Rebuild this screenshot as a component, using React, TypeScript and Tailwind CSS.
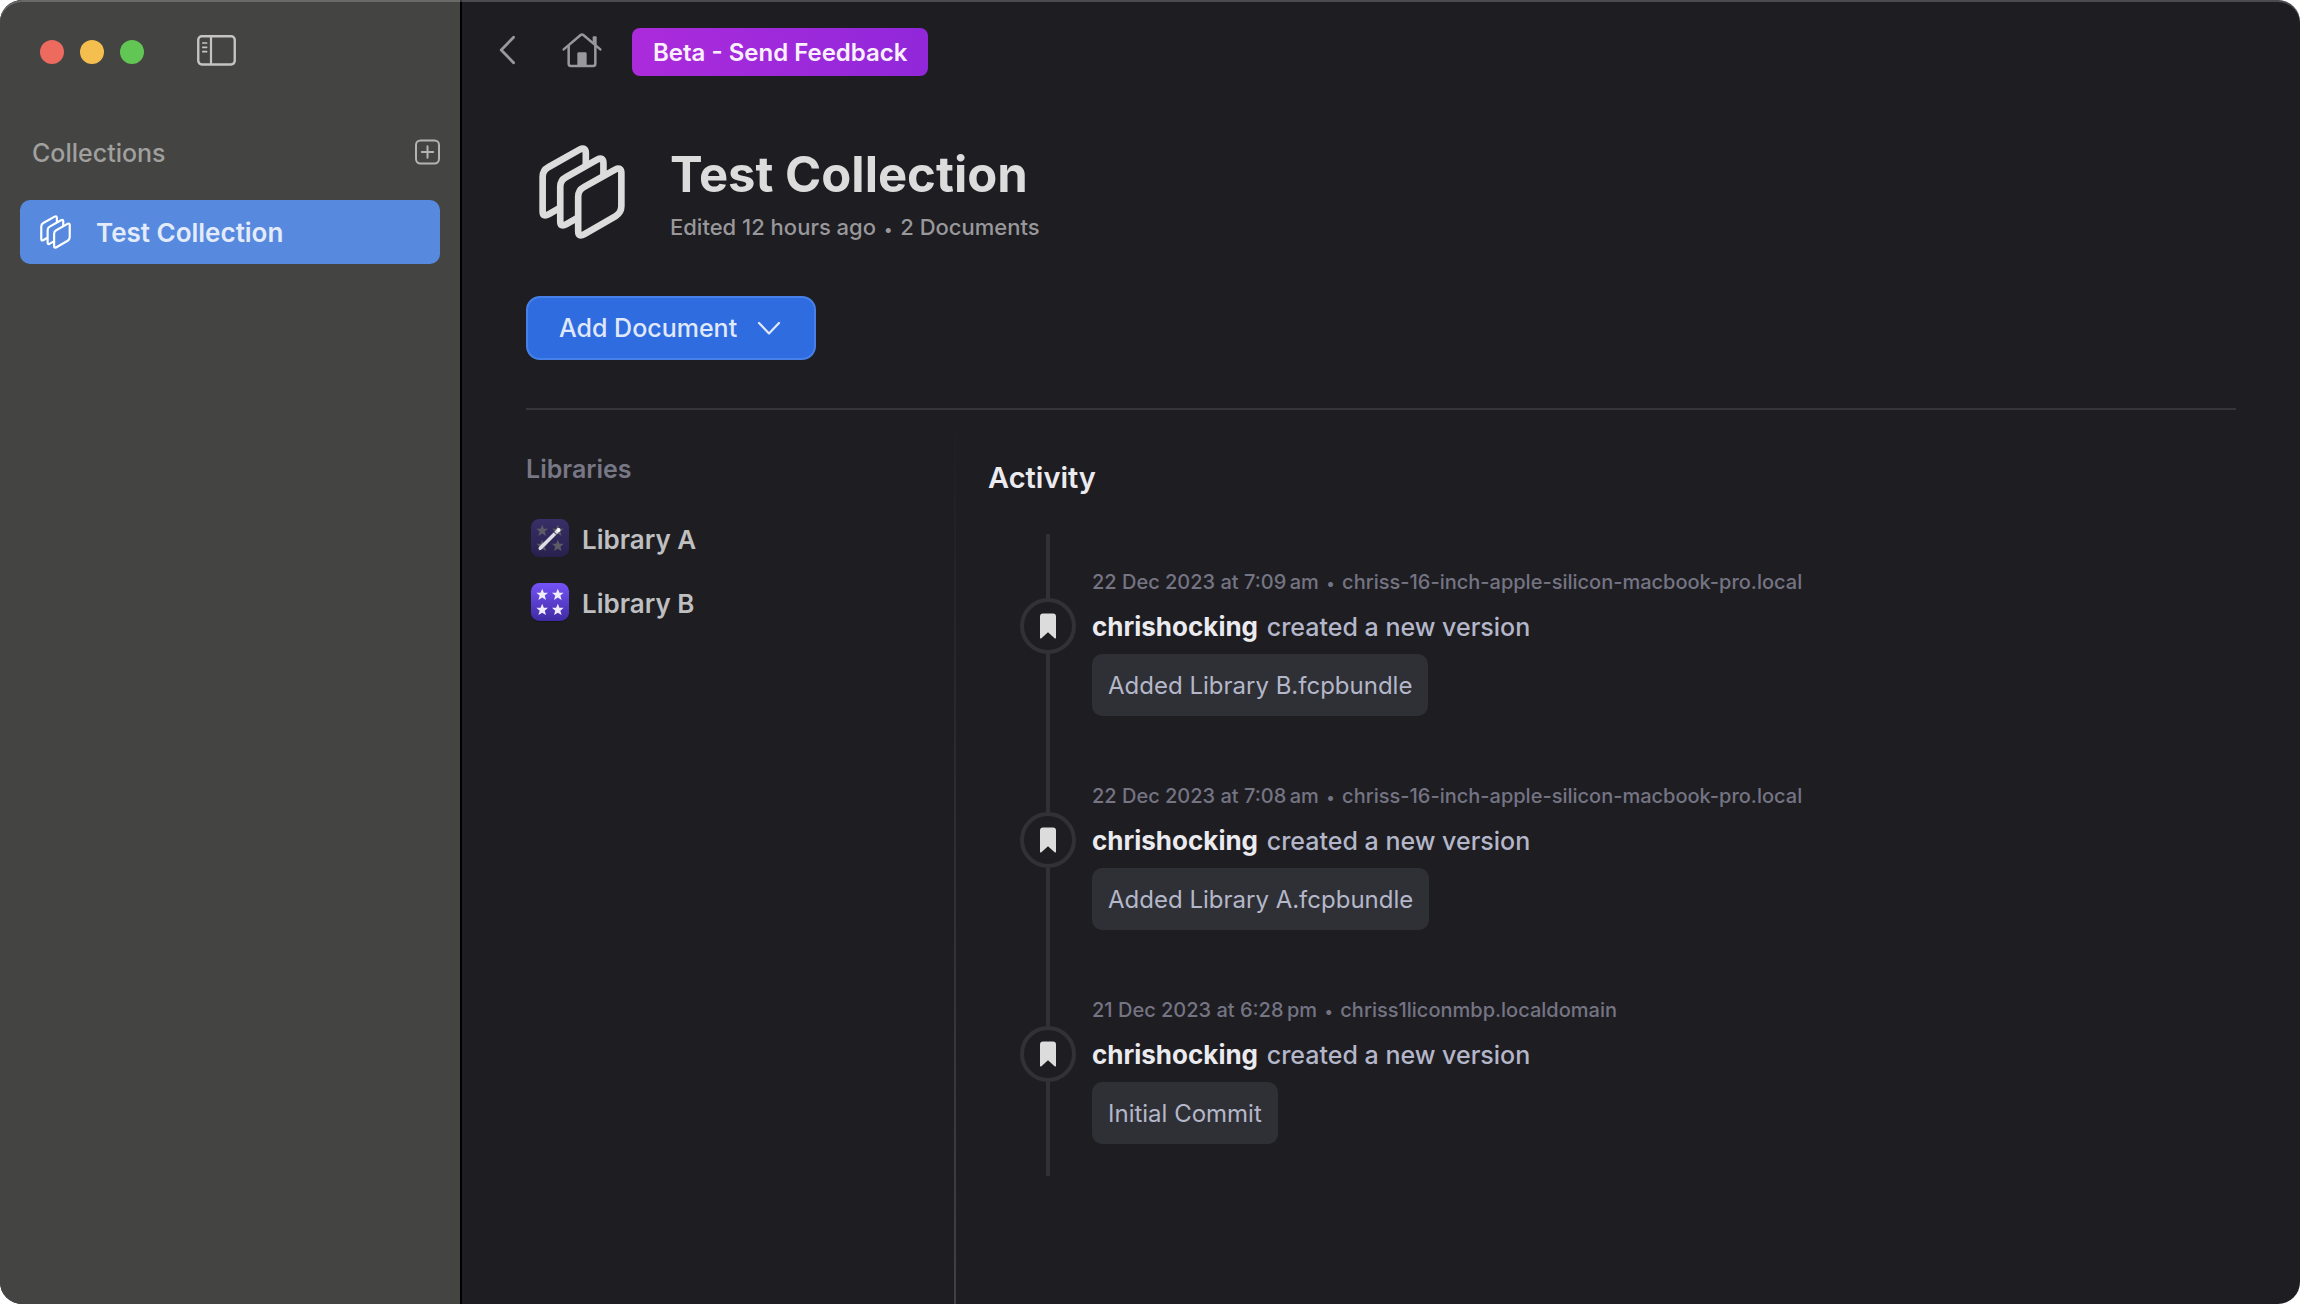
import type { ReactNode } from "react";

type Entry = { date: string; host: string; user: string; note: string };

const entries: Entry[] = [
  {
    date: "22 Dec 2023 at 7:09\u202fam",
    host: "chriss-16-inch-apple-silicon-macbook-pro.local",
    user: "chrishocking",
    note: "Added Library B.fcpbundle",
  },
  {
    date: "22 Dec 2023 at 7:08\u202fam",
    host: "chriss-16-inch-apple-silicon-macbook-pro.local",
    user: "chrishocking",
    note: "Added Library A.fcpbundle",
  },
  {
    date: "21 Dec 2023 at 6:28\u202fpm",
    host: "chriss1liconmbp.localdomain",
    user: "chrishocking",
    note: "Initial Commit",
  },
];

const SHEET =
  "M145 290 V186 Q145 166 162 157 L256 104 Q275 94 275 115 V214 Q275 234 258 244 L164 298 Q145 309 145 290 Z";

function CollectionIcon({ className, strokeWidth = 20 }: { className: string; strokeWidth?: number }) {
  return (
    <svg viewBox="28 30 257 283" className={className} strokeWidth={strokeWidth} stroke="currentColor" aria-hidden="true">
      <path d={SHEET} transform="translate(-107 -60)" />
      <path d={SHEET} transform="translate(-54 -30)" />
      <path d={SHEET} />
    </svg>
  );
}

function SidebarIcon() {
  return (
    <svg viewBox="0 0 39 31" className="h-[31px] w-[39px]" fill="none" stroke="currentColor" aria-hidden="true">
      <rect x="1.25" y="1.25" width="36.5" height="28.2" rx="3.6" strokeWidth="2.4" />
      <path d="M14 1v28.5" strokeWidth="2.2" />
      <path d="M5.8 8h3.8M5.8 12.3h3.8M5.8 16.7h3.8" strokeWidth="1.7" strokeLinecap="round" />
    </svg>
  );
}

function PlusIcon() {
  return (
    <svg viewBox="0 0 26 26" className="size-[26px]" fill="none" stroke="currentColor" aria-hidden="true">
      <rect x="2" y="1.5" width="23" height="23" rx="4.4" strokeWidth="2" />
      <path d="M13.5 7.3v11.4M7.8 13h11.4" strokeWidth="2" strokeLinecap="round" />
    </svg>
  );
}

function BackIcon() {
  return (
    <svg viewBox="0 0 16 30" className="h-[30px] w-4" fill="none" stroke="currentColor" strokeWidth="2.8" strokeLinecap="round" strokeLinejoin="round" aria-hidden="true">
      <path d="M14.6 2.2 2.2 15l12.4 12.8" />
    </svg>
  );
}

function HomeIcon() {
  return (
    <svg viewBox="32 34 126 108" className="h-9 w-[42px]" fill="none" stroke="currentColor" strokeWidth="7.5" strokeLinecap="round" strokeLinejoin="round" aria-hidden="true">
      <path d="M40 86 91 43Q95 40 99 43L150 86" />
      <path d="M55 76V129Q55 136 62 136H128Q135 136 135 129V76" />
      <path d="M127 64V50Q127 47 130 47H136Q139 47 139 50V75Z" fill="currentColor" stroke="none" />
      <path d="M81 136V99Q81 95 85 95H105Q109 95 109 99V136Z" fill="currentColor" stroke="none" />
    </svg>
  );
}

function ChevronDown() {
  return (
    <svg viewBox="0 0 24 14" className="h-3.5 w-6" fill="none" stroke="currentColor" strokeWidth="2.2" strokeLinecap="round" strokeLinejoin="round" aria-hidden="true">
      <path d="M2 2l10 10.4L22 2" />
    </svg>
  );
}

function Bookmark() {
  return (
    <svg viewBox="0 0 16 26" className="h-[26px] w-4" fill="currentColor" aria-hidden="true">
      <path d="M3 .5h10a3 3 0 0 1 3 3v21.2a.8.8 0 0 1-1.4.6L8 19.2l-6.6 6.1A.8.8 0 0 1 0 24.7V3.5a3 3 0 0 1 3-3Z" />
    </svg>
  );
}

const STAR = "M0-6.2 1.7-2H6L2.6.9 3.9 5.4 0 2.9-3.9 5.4-2.6.9-6-2H-1.7Z";

function Stars({ fill }: { fill: string }) {
  return (
    <g fill={fill}>
      <path d={STAR} transform="translate(12.5 13)" />
      <path d={STAR} transform="translate(28.5 13)" />
      <path d={STAR} transform="translate(12.5 28.5)" />
      <path d={STAR} transform="translate(28.5 28.5)" />
    </g>
  );
}

function LibraryAIcon() {
  return (
    <svg viewBox="0 0 41 41" className="size-10" aria-hidden="true">
      <defs>
        <linearGradient id="libA" x1="0" y1="0" x2="0" y2="1">
          <stop offset="0" stopColor="#372f66" />
          <stop offset="1" stopColor="#28214f" />
        </linearGradient>
      </defs>
      <rect x="1" y="1" width="39" height="39" rx="8.5" fill="url(#libA)" />
      <Stars fill="#5d5b66" />
      <path d="M10.5 31 29 12.5" stroke="#dedce4" strokeWidth="3.6" strokeLinecap="round" />
      <path d="M24.5 14.2 27.3 17" stroke="#5d5b66" strokeWidth="1.2" />
      <circle cx="29.3" cy="12.2" r="2" fill="#fff" />
    </svg>
  );
}

function LibraryBIcon() {
  return (
    <svg viewBox="0 0 41 41" className="size-10" aria-hidden="true">
      <defs>
        <linearGradient id="libB" x1="0" y1="0" x2="0" y2="1">
          <stop offset="0" stopColor="#7553f8" />
          <stop offset="1" stopColor="#3f2ba3" />
        </linearGradient>
      </defs>
      <rect x="1" y="1.8" width="39" height="39" rx="8.5" fill="#151419" />
      <rect x="1" y="1" width="39" height="39" rx="8.5" fill="url(#libB)" />
      <Stars fill="#f1eefc" />
    </svg>
  );
}

function Bullet() {
  return <span className="mx-0.5 text-[16px] leading-none">•</span>;
}

function LibraryRow({ icon, name }: { icon: ReactNode; name: string }) {
  return (
    <li>
      <a href="#" className="flex h-16 items-center gap-3 pl-1">
        {icon}
        <span className="pt-1 text-[26px] leading-8 font-semibold text-[#bfbfc0]">{name}</span>
      </a>
    </li>
  );
}

function ActivityItem({ entry }: { entry: Entry }) {
  return (
    <li className="flex gap-4">
      <div className="flex w-14 shrink-0 flex-col items-center">
        <div className="h-16 w-1 bg-[#313136]" />
        <div className="flex size-14 items-center justify-center rounded-full border-4 border-[#313136] text-[#dcdcdc]">
          <Bookmark />
        </div>
        <div className="w-1 flex-1 bg-[#313136]" />
      </div>
      <div className="flex flex-col items-start py-8">
        <p className="text-[20px] leading-8 font-medium text-[#747483]">
          {entry.date} <Bullet /> {entry.host}
        </p>
        <p className="mt-[13px] text-[25px] leading-8 font-medium text-[#b4b7c9]">
          <strong className="mr-0.5 text-[26px] leading-none font-bold text-[#ebebef]">{entry.user}</strong> created a
          new version
        </p>
        <p className="mt-[11px] flex h-[62px] items-center rounded-[10px] bg-[#2f3035] px-4 pt-0.5 text-[24px] text-[#b4b7c9]">
          {entry.note}
        </p>
      </div>
    </li>
  );
}

export default function App() {
  return (
    <div className="bg-white font-[Inter,sans-serif]">
      <div className="relative flex min-h-screen overflow-hidden rounded-[22px] bg-[#1e1d22]">
        <aside className="w-[462px] shrink-0 border-r-2 border-black bg-[#444442] px-5 pt-7">
          <div className="flex h-12 items-center pl-5">
            <div className="flex gap-4">
              <button aria-label="Close" className="size-6 rounded-full bg-[#ed6a5f]" />
              <button aria-label="Minimise" className="size-6 rounded-full bg-[#f5bf4f]" />
              <button aria-label="Zoom" className="size-6 rounded-full bg-[#62c655]" />
            </div>
            <button aria-label="Toggle sidebar" className="mb-1 ml-[53px] text-[#c5c4c3]">
              <SidebarIcon />
            </button>
          </div>
          <div className="mt-[52px] flex h-12 items-center justify-between pl-3 text-[#a0a09f]">
            <h2 className="pt-0.5 text-[25px] leading-8 font-medium">Collections</h2>
            <button aria-label="Add collection" className="text-[#b4b4b2]">
              <PlusIcon />
            </button>
          </div>
          <nav className="mt-6">
            <a
              href="#"
              className="flex h-16 items-center gap-[25px] rounded-[10px] bg-[#578adf] px-5 text-[26px] font-semibold text-[#e4ecfa]"
            >
              <CollectionIcon className="h-[34px] w-[31px] fill-[#578adf] text-white" strokeWidth={18} />
              Test Collection
            </a>
          </nav>
        </aside>

        <main className="flex min-w-0 flex-1 flex-col">
          <div className="flex h-[76px] items-center pt-7 pl-[37px] text-[#98989d]">
            <button aria-label="Back" className="mb-1">
              <BackIcon />
            </button>
            <button aria-label="Home" className="mb-1 ml-[46px]">
              <HomeIcon />
            </button>
            <button className="ml-[29px] h-12 rounded-lg bg-linear-to-r from-[#ab2bdb] to-[#9127da] px-[21px] pt-0.5 text-[24px] font-semibold text-[#faf0fd]">
              Beta - Send Feedback
            </button>
          </div>

          <div className="flex flex-1 flex-col px-16 pt-[69px]">
            <header className="flex items-start gap-[45px] pl-[13px]">
              <CollectionIcon className="h-[94px] w-[86px] fill-[#1e1d22] text-[#dcdcdc]" />
              <div>
                <h1 className="text-[49px] leading-[60px] font-bold text-[#dcdcdc]">Test Collection</h1>
                <p className="mt-2 text-[22px] leading-7 font-medium text-[#98989b]">
                  Edited 12 hours ago <Bullet /> 2 Documents
                </p>
              </div>
            </header>

            <button className="mt-[55px] flex h-16 items-center gap-5 self-start rounded-[14px] border-2 border-[#4680e8] bg-[#2f6ce0] pr-[33px] pl-[31px] text-[25px] font-medium text-[#e0e9fb]">
              <span className="pt-0.5">Add Document</span>
              <ChevronDown />
            </button>

            <hr className="mt-12 border-t-2 border-[#36363a]" />

            <div className="flex flex-1">
              <section className="w-[428px] shrink-0 pt-[43px]">
                <h2 className="text-[25px] leading-8 font-semibold text-[#787785]">Libraries</h2>
                <ul className="mt-[21px]">
                  <LibraryRow icon={<LibraryAIcon />} name="Library A" />
                  <LibraryRow icon={<LibraryBIcon />} name="Library B" />
                </ul>
              </section>

              <div className="w-0.5 shrink-0 bg-linear-to-b from-transparent to-[#404045]" />

              <section className="min-w-0 flex-1 pt-[50px] pl-8">
                <h2 className="text-[29px] leading-9 font-semibold text-[#ebebef]">Activity</h2>
                <ol className="mt-[38px] pl-8">
                  {entries.map((entry) => (
                    <ActivityItem key={entry.date} entry={entry} />
                  ))}
                </ol>
              </section>
            </div>
          </div>
        </main>
        <div className="pointer-events-none absolute inset-0 rounded-[22px] shadow-[inset_0_2px_0_rgba(255,255,255,0.2)]" />
      </div>
    </div>
  );
}
